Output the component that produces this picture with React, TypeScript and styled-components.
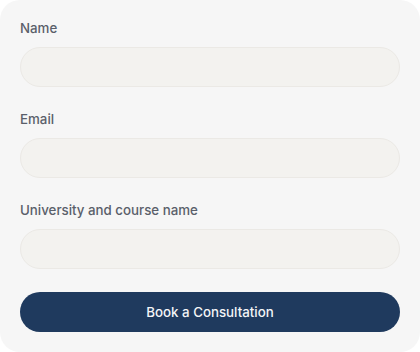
import React from 'react'
import styled, { createGlobalStyle } from 'styled-components'

const GlobalStyle = createGlobalStyle`
  html, body {
    margin: 0;
    padding: 0;
    background: #ffffff;
  }
  * {
    box-sizing: border-box;
  }
`

const Card = styled.form`
  width: 420px;
  height: 352px;
  background: #f6f6f6;
  border-radius: 20px;
  padding: 18px 20px 20px;
  display: flex;
  flex-direction: column;
  font-family: Inter, 'Noto Sans', sans-serif;
`

const Field = styled.div`
  display: flex;
  flex-direction: column;
  gap: 9px;
  margin-bottom: 22px;
`

const Label = styled.label`
  font-size: 13.3px;
  font-weight: 500;
  line-height: 20px;
  color: #5a5f6a;
`

const Input = styled.input`
  height: 40px;
  width: 100%;
  border-radius: 999px;
  border: 1px solid #ebe9e5;
  background: #f3f2ef;
  padding: 0 16px;
  font: inherit;
  font-size: 14px;
  outline: none;
`

const Button = styled.button`
  margin-top: 1px;
  height: 40px;
  width: 100%;
  border: none;
  border-radius: 999px;
  background: #1f3a5e;
  color: #f4f5f7;
  font-family: inherit;
  font-size: 13.3px;
  font-weight: 500;
  cursor: pointer;
`

const fields = [
  { id: 'name', label: 'Name', type: 'text' },
  { id: 'email', label: 'Email', type: 'email' },
  { id: 'course', label: 'University and course name', type: 'text' },
]

export default function App() {
  return (
    <>
      <GlobalStyle />
      <Card onSubmit={(e) => e.preventDefault()}>
        {fields.map((f) => (
          <Field key={f.id}>
            <Label htmlFor={f.id}>{f.label}</Label>
            <Input id={f.id} type={f.type} />
          </Field>
        ))}
        <Button type="submit">Book a Consultation</Button>
      </Card>
    </>
  )
}
